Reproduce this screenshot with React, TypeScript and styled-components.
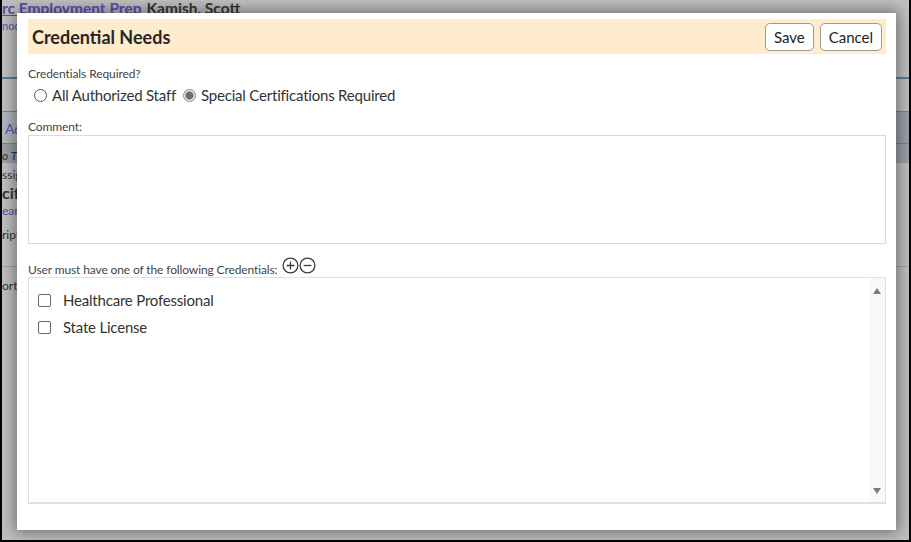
import React from 'react'
import styled, { createGlobalStyle } from 'styled-components'

const GlobalStyle = createGlobalStyle`
  html, body {
    margin: 0;
    padding: 0;
    background: #000;
  }
  body {
    font-family: Lato, "Liberation Sans", sans-serif;
    color: #333;
  }
  * {
    box-sizing: border-box;
  }
`

const credentials = ['Healthcare Professional', 'State License']

type SideKind = 'plain' | 'bold' | 'link'

const sideItems: { text: string; kind: SideKind }[] = [
  { text: 'ssig', kind: 'plain' },
  { text: 'cif', kind: 'bold' },
  { text: 'ear', kind: 'link' },
]

const PlusCircle = () => (
  <svg width="17" height="17" viewBox="0 0 17 17" fill="none" stroke="#3c3c3c" strokeWidth="1.3">
    <circle cx="8.5" cy="8.5" r="7.4" />
    <path d="M8.5 4.6v7.8M4.6 8.5h7.8" />
  </svg>
)

const MinusCircle = () => (
  <svg width="17" height="17" viewBox="0 0 17 17" fill="none" stroke="#3c3c3c" strokeWidth="1.3">
    <circle cx="8.5" cy="8.5" r="7.4" />
    <path d="M4.6 8.5h7.8" />
  </svg>
)

export default function App() {
  return (
    <>
      <GlobalStyle />
      <Frame>
        <Page>
          <TopLine>
            <Program>rc Employment Prep</Program>
            <Person>Kamish, Scott</Person>
          </TopLine>
          <SubLink>noc</SubLink>
          <Rule />
          <TabStrip>
            <TabRow>
              <Tab>Ad</Tab>
            </TabRow>
            <TabNote>o T</TabNote>
          </TabStrip>
          <SideList>
            {sideItems.map(item => (
              <SideItem key={item.text} kind={item.kind}>
                {item.text}
              </SideItem>
            ))}
            <SideItem kind="plain" $gap>
              ript
            </SideItem>
            <SideRule />
            <SideItem kind="plain">orts</SideItem>
          </SideList>
        </Page>

        <Overlay />

        <Dialog>
          <Header>
            <Title>Credential Needs</Title>
            <Actions>
              <Button>Save</Button>
              <Button>Cancel</Button>
            </Actions>
          </Header>

          <Body>
            <Label>Credentials Required?</Label>
            <RadioRow>
              <RadioOption>
                <Radio />
                All Authorized Staff
              </RadioOption>
              <RadioOption>
                <Radio $checked />
                Special Certifications Required
              </RadioOption>
            </RadioRow>

            <CommentLabel>Comment:</CommentLabel>
            <Comment />

            <ListLabel>
              <ListLabelText>User must have one of the following Credentials:</ListLabelText>
              <IconButtons>
                <PlusCircle />
                <MinusCircle />
              </IconButtons>
            </ListLabel>
            <ListBox>
              <Items>
                {credentials.map(name => (
                  <Item key={name}>
                    <Check />
                    {name}
                  </Item>
                ))}
              </Items>
              <ScrollTrack>
                <Arrow $dir="up" />
                <Arrow $dir="down" />
              </ScrollTrack>
            </ListBox>
          </Body>
        </Dialog>
      </Frame>
    </>
  )
}

const Frame = styled.div`
  position: relative;
  width: 911px;
  height: 542px;
  overflow: hidden;
  background: #fff;
  border-left: 2px solid #000;
  border-right: 2px solid #000;
  border-bottom: 2px solid #000;
`

const Page = styled.div`
  display: flex;
  flex-direction: column;
  font-family: Lato, "Liberation Sans", sans-serif;
`

const TopLine = styled.div`
  display: flex;
  gap: 5px;
  height: 20px;
  margin-top: -1px;
  font-size: 15.5px;
  font-weight: 700;
  white-space: nowrap;
`

const Program = styled.span`
  color: #7b68ee;
  text-decoration: underline;
`

const Person = styled.span`
  color: #4a4a4a;
`

const SubLink = styled.div`
  height: 14px;
  font-size: 11px;
  color: #7b68ee;
  white-space: nowrap;
`

const Rule = styled.div`
  margin-top: 44px;
  height: 2px;
  background: #6aaed0;
`

const TabStrip = styled.div`
  margin-top: 32px;
  height: 52px;
  background: #cdd6e2;
  border-top: 1px solid #88b4dc;
`

const TabRow = styled.div`
  height: 32px;
  border-bottom: 1px solid #88b4dc;
  display: flex;
`

const Tab = styled.div`
  width: 40px;
  padding: 8px 0 0 3px;
  background: #eef2f9;
  color: #7b68ee;
  font-size: 14px;
  white-space: nowrap;
`

const TabNote = styled.div`
  padding-top: 4px;
  font-size: 12px;
  font-style: italic;
  color: #444;
`

const SideList = styled.div`
  display: flex;
  flex-direction: column;
  padding-top: 3px;
`

const SideItem = styled.div<{ kind: SideKind; $gap?: boolean }>`
  height: 18px;
  line-height: 18px;
  margin-top: ${p => (p.$gap ? '6px' : '0')};
  white-space: nowrap;
  font-size: ${p => (p.kind === 'bold' ? '16px' : '12px')};
  font-weight: ${p => (p.kind === 'bold' ? 700 : 400)};
  color: ${p => (p.kind === 'link' ? '#7b68ee' : '#444')};
`

const SideRule = styled.div`
  margin: 22px 0 10px;
  height: 1px;
  background: #d8d8d8;
`

const Overlay = styled.div`
  position: absolute;
  inset: 0;
  background: rgba(0, 0, 0, 0.25);
`

const Dialog = styled.div`
  position: absolute;
  left: 15px;
  top: 13px;
  width: 879px;
  height: 517px;
  background: #fff;
  padding: 6px 10px 0 11px;
  box-shadow: 0 0 14px 2px rgba(0, 0, 0, 0.45);
  font-family: Lato, "Liberation Sans", sans-serif;
  color: #333;
`

const Header = styled.div`
  display: flex;
  align-items: center;
  justify-content: space-between;
  height: 35px;
  padding: 0 4px;
  background: #ffebcd;
`

const Title = styled.h1`
  margin: 0;
  font-size: 18px;
  font-weight: 700;
  color: #262626;
`

const Actions = styled.div`
  display: flex;
  gap: 6px;
`

const Button = styled.button`
  height: 28px;
  padding: 0 8px;
  border: 1px solid #9a9a9a;
  border-radius: 5px;
  background: #fff;
  font-family: inherit;
  font-size: 15px;
  color: #222;
`

const Body = styled.div`
  display: flex;
  flex-direction: column;
`

const Label = styled.div`
  margin-top: 12px;
  font-size: 12px;
  line-height: 15px;
  letter-spacing: -0.1px;
  color: #444;
`

const RadioRow = styled.div`
  display: flex;
  gap: 7px;
  margin-top: 4px;
  padding-left: 6px;
`

const RadioOption = styled.label`
  display: flex;
  align-items: center;
  gap: 5px;
  font-size: 15px;
  letter-spacing: -0.2px;
  line-height: 20px;
  color: #333;
`

const Radio = styled.span<{ $checked?: boolean }>`
  width: 13px;
  height: 13px;
  border-radius: 50%;
  border: 1px solid ${p => (p.$checked ? '#8a8a8a' : '#555')};
  background: ${p =>
    p.$checked ? 'radial-gradient(circle, #6e6e6e 0 3.5px, #e6e6e6 4.5px)' : '#fff'};
`

const CommentLabel = styled(Label)`
  margin-top: 14px;
`

const Comment = styled.div`
  margin-top: 1px;
  height: 109px;
  border: 1px solid #d9d9d9;
`

const ListLabel = styled.div`
  display: flex;
  align-items: flex-start;
  height: 20px;
  margin-top: 13px;
`

const ListLabelText = styled.span`
  padding-top: 5px;
  font-size: 12px;
  line-height: 15px;
  letter-spacing: -0.12px;
  color: #444;
`

const IconButtons = styled.span`
  display: flex;
  margin-left: 5px;
`

const ListBox = styled.div`
  display: flex;
  height: 227px;
  border: 1px solid #e0e0e0;
  border-bottom-width: 2px;
`

const Items = styled.div`
  flex: 1;
  display: flex;
  flex-direction: column;
  gap: 7px;
  padding: 12px 0 0 9px;
`

const Item = styled.label`
  display: flex;
  align-items: center;
  gap: 12px;
  height: 20px;
  font-size: 15px;
  letter-spacing: -0.2px;
  color: #333;
`

const Check = styled.span`
  width: 13px;
  height: 13px;
  border: 1px solid #666;
  border-radius: 2px;
  background: #fff;
`

const ScrollTrack = styled.div`
  width: 16px;
  display: flex;
  flex-direction: column;
  justify-content: space-between;
  align-items: center;
  padding: 10px 0 8px;
  background: #f9f9f9;
`

const Arrow = styled.span<{ $dir: 'up' | 'down' }>`
  width: 0;
  height: 0;
  border-left: 4.5px solid transparent;
  border-right: 4.5px solid transparent;
  ${p =>
    p.$dir === 'up'
      ? 'border-bottom: 6px solid #7a7a7a;'
      : 'border-top: 6px solid #7a7a7a;'}
`
